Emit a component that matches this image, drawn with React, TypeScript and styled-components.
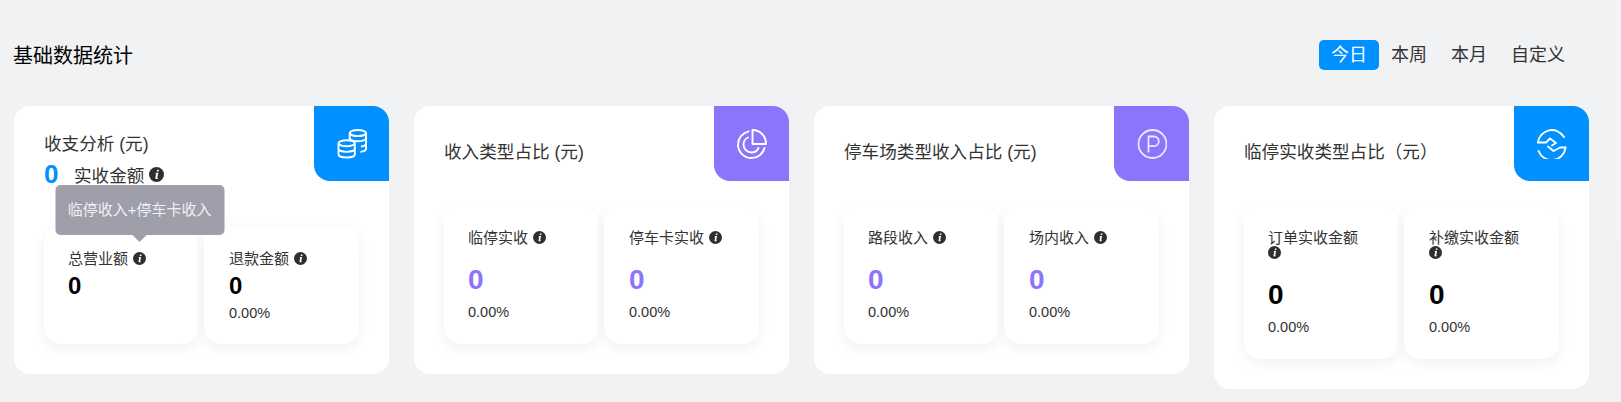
import React from 'react';
import styled, { createGlobalStyle } from 'styled-components';

const BLUE = '#0090ff';
const PURPLE = '#8a75fc';

const GlobalStyle = createGlobalStyle`
  html, body {
    margin: 0;
    padding: 0;
    background: #f1f2f4;
    overflow: hidden;
  }
  body {
    font-family: "Liberation Sans", "Noto Sans CJK SC", sans-serif;
    color: #333;
  }
`;

const Page = styled.div`
  width: 1621px;
  height: 402px;
  padding: 0 32px 0 14px;
  box-sizing: border-box;
`;

// faint scrollbar track along the right edge
const ScrollTrack = styled.div`
  position: absolute;
  top: 0;
  right: 0;
  width: 7px;
  height: 240px;
  background: #f3f4f6;
  border-radius: 0 0 0 2px;
`;

const TopBar = styled.div`
  height: 106px;
  padding: 40px 0 0;
  box-sizing: border-box;
  display: flex;
  justify-content: space-between;
  align-items: flex-start;
`;

const PageTitle = styled.h2`
  margin: 0 0 0 -1px;
  font-size: 20px;
  font-weight: 400;
  line-height: 32px;
  color: #000;
`;

const Tabs = styled.div`
  display: flex;
  margin-right: 12px;
`;

const Tab = styled.div<{ $active?: boolean }>`
  height: 30px;
  line-height: 30px;
  padding: 0 12px;
  border-radius: 5px;
  font-size: 18px;
  color: ${(p) => (p.$active ? '#fff' : '#333')};
  background: ${(p) => (p.$active ? BLUE : 'transparent')};
`;

const CardRow = styled.div`
  display: flex;
  align-items: flex-start;
  gap: 25px;
`;

const Card = styled.section`
  position: relative;
  width: 375px;
  padding: 0 30px 30px;
  box-sizing: border-box;
  background: #fff;
  border-radius: 16px;
`;

const Badge = styled.div<{ $color: string }>`
  position: absolute;
  top: 0;
  right: 0;
  width: 75px;
  height: 75px;
  display: flex;
  align-items: center;
  justify-content: center;
  background: ${(p) => p.$color};
  border-radius: 0 16px 0 16px;
  color: #fff;
`;

const Head = styled.div<{ $tall?: boolean }>`
  height: ${(p) => (p.$tall ? '120px' : '100px')};
  padding-top: ${(p) => (p.$tall ? '28px' : '36px')};
  box-sizing: border-box;
`;

const CardTitle = styled.div`
  font-size: 17.6px;
  line-height: 20px;
  color: #333;
`;

const Summary = styled.div`
  display: flex;
  align-items: center;
  height: 24px;
  margin-top: 8px;
  font-size: 17.6px;
  color: #333;
`;

const SummaryValue = styled.span`
  width: 30px;
  font-size: 26px;
  font-weight: 700;
  color: ${BLUE};
`;

const Stats = styled.div`
  display: flex;
`;

const Stat = styled.div<{ $tall?: boolean; $low?: boolean }>`
  width: 154px;
  height: ${(p) => (p.$tall ? '153px' : p.$low ? '118px' : '138px')};
  padding: ${(p) => (p.$low ? '25px' : '24px')} 12px 0 24px;
  box-sizing: border-box;
  background: #fff;
  border-radius: 16px;
  box-shadow: 0 4px 14px rgba(0, 0, 0, 0.06);
  & + & {
    margin-left: 6px;
    width: 155px;
    padding-left: 25px;
  }
`;

const StatLabel = styled.div`
  font-size: 15px;
  line-height: 16px;
  color: #333;
`;

const StatValue = styled.div<{ $color?: string; $small?: boolean; $top: number }>`
  margin-top: ${(p) => p.$top}px;
  font-size: ${(p) => (p.$small ? '24px' : '28px')};
  line-height: 28px;
  font-weight: 700;
  color: ${(p) => p.$color || '#000'};
`;

const Percent = styled.div<{ $top: number }>`
  margin-top: ${(p) => p.$top}px;
  font-size: 14.5px;
  line-height: 16px;
  color: #333;
`;

const InfoWrap = styled.span<{ $size?: number }>`
  position: relative;
  display: inline-block;
  flex: none;
  width: ${(p) => p.$size || 13}px;
  height: ${(p) => p.$size || 13}px;
  margin-left: 5px;
  vertical-align: -1px;
`;

const InfoBreak = styled(InfoWrap)`
  display: block;
  margin: 0;
`;

const Tooltip = styled.div`
  position: absolute;
  left: 50%;
  bottom: 30px;
  transform: translateX(-50%);
  width: 169px;
  height: 50px;
  line-height: 50px;
  text-align: center;
  font-size: 15px;
  color: #f0f0f2;
  background: #9e9fab;
  border-radius: 5px;
  white-space: nowrap;
  &::after {
    content: '';
    position: absolute;
    left: 50%;
    bottom: -7px;
    margin-left: -7px;
    border-style: solid;
    border-width: 7px 7px 0;
    border-color: #9e9fab transparent transparent;
  }
`;

const InfoGlyph = () => (
  <svg width="100%" height="100%" viewBox="0 0 13 13" style={{ display: 'block' }}>
    <circle cx="6.5" cy="6.5" r="6.5" fill="#2f2f2f" />
    <path d="M7 2.4h1.6l-.3 1.5H6.700zM6.300 5h1.800l-.9 4.200c0 .3.2.3.6.1l-.1.8c-1 .5-2.300.4-2.200-.8l.7-3.400-.8-.1z" fill="#fff" />
  </svg>
);

const Info = ({ tip }: { tip?: string }) => (
  <InfoWrap>
    <InfoGlyph />
    {tip && <Tooltip>{tip}</Tooltip>}
  </InfoWrap>
);

const CoinsIcon = () => (
  <svg width="30" height="30" viewBox="0.5 0 28.5 29.5" fill="none" stroke="currentColor" strokeWidth="1.9">
    <ellipse cx="20.500" cy="4" rx="8" ry="3" />
    <path d="M12.500 4v9M28.500 4v15.500c0 1.500-2.200 2.700-5.500 3M12.500 9c0 1.600 3.600 3 8 3s8-1.400 8-3M23.500 17.200c2.900-.4 5-1.500 5-3" />
    <ellipse cx="9.500" cy="14" rx="8" ry="3" fill="#0090ff" />
    <path d="M1.500 14v11c0 1.700 3.600 3 8 3s8-1.300 8-3V14M1.500 19.500c0 1.700 3.600 3 8 3s8-1.300 8-3" />
  </svg>
);

const PieIcon = () => (
  <svg width="30" height="30" viewBox="0 0 30 30" fill="none" stroke="currentColor" strokeWidth="1.9">
    <path d="M15.500 1c7.500 0 13.500 6 13.500 14H15.500z" strokeLinejoin="round" />
    <path d="M11.500 2.300C5.500 3.800 1 9.200 1 15.500 1 23 7 29 14.500 29c6.200 0 11.500-4.200 13-10" strokeLinecap="round" />
    <path d="M11 8.500c-2.700 1.300-4.500 4-4.500 7 0 4.400 3.600 8 8 8 3 0 5.700-1.700 7-4.500" strokeLinecap="round" />
  </svg>
);

const ParkingIcon = () => (
  <svg width="30" height="30" viewBox="0 0 30 30" fill="none" stroke="currentColor" strokeWidth="1.8" style={{ opacity: 0.85 }}>
    <circle cx="15.500" cy="15" r="14" />
    <path d="M11.500 23.500V7.500h5.500a4.800 4.800 0 0 1 0 9.600h-5.500" />
  </svg>
);

const ExchangeIcon = () => (
  <svg width="30" height="30" viewBox="0 0 30 30" fill="none" stroke="currentColor" strokeWidth="1.9" strokeLinecap="round" strokeLinejoin="round">
    <path d="M1 13.500A14 14 0 0 1 27 8" />
    <path d="M1 13.500H9l4-4 6 4.500-4 2.500" />
    <path d="M28.500 18.500A14 14 0 0 1 1.500 22" />
    <path d="M28.500 18.500H23L16.500 22 11 17.500" />
  </svg>
);

export default function App() {
  return (
    <Page>
      <GlobalStyle />
      <ScrollTrack />
      <TopBar>
        <PageTitle>基础数据统计</PageTitle>
        <Tabs>
          <Tab $active>今日</Tab>
          <Tab>本周</Tab>
          <Tab>本月</Tab>
          <Tab>自定义</Tab>
        </Tabs>
      </TopBar>
      <CardRow>
        <Card>
          <Badge $color={BLUE}><CoinsIcon /></Badge>
          <Head $tall>
            <CardTitle>收支分析 (元)</CardTitle>
            <Summary>
              <SummaryValue>0</SummaryValue>
              <span>实收金额</span>
              <InfoWrap $size={15}><InfoGlyph /></InfoWrap>
            </Summary>
          </Head>
          <Stats>
            <Stat $low>
              <StatLabel>总营业额<Info tip="临停收入+停车卡收入" /></StatLabel>
              <StatValue $small $top={5}>0</StatValue>
            </Stat>
            <Stat $low>
              <StatLabel>退款金额<Info /></StatLabel>
              <StatValue $small $top={5}>0</StatValue>
              <Percent $top={5}>0.00%</Percent>
            </Stat>
          </Stats>
        </Card>
        <Card>
          <Badge $color={PURPLE}><PieIcon /></Badge>
          <Head><CardTitle>收入类型占比 (元)</CardTitle></Head>
          <Stats>
            <Stat>
              <StatLabel>临停实收<Info /></StatLabel>
              <StatValue $color={PURPLE} $top={20}>0</StatValue>
              <Percent $top={10}>0.00%</Percent>
            </Stat>
            <Stat>
              <StatLabel>停车卡实收<Info /></StatLabel>
              <StatValue $color={PURPLE} $top={20}>0</StatValue>
              <Percent $top={10}>0.00%</Percent>
            </Stat>
          </Stats>
        </Card>
        <Card>
          <Badge $color={PURPLE}><ParkingIcon /></Badge>
          <Head><CardTitle>停车场类型收入占比 (元)</CardTitle></Head>
          <Stats>
            <Stat>
              <StatLabel>路段收入<Info /></StatLabel>
              <StatValue $color={PURPLE} $top={20}>0</StatValue>
              <Percent $top={10}>0.00%</Percent>
            </Stat>
            <Stat>
              <StatLabel>场内收入<Info /></StatLabel>
              <StatValue $color={PURPLE} $top={20}>0</StatValue>
              <Percent $top={10}>0.00%</Percent>
            </Stat>
          </Stats>
        </Card>
        <Card>
          <Badge $color={BLUE}><ExchangeIcon /></Badge>
          <Head><CardTitle>临停实收类型占比（元）</CardTitle></Head>
          <Stats>
            <Stat $tall>
              <StatLabel>订单实收金额<InfoBreak><InfoGlyph /></InfoBreak></StatLabel>
              <StatValue $top={22}>0</StatValue>
              <Percent $top={10}>0.00%</Percent>
            </Stat>
            <Stat $tall>
              <StatLabel>补缴实收金额<InfoBreak><InfoGlyph /></InfoBreak></StatLabel>
              <StatValue $top={22}>0</StatValue>
              <Percent $top={10}>0.00%</Percent>
            </Stat>
          </Stats>
        </Card>
      </CardRow>
    </Page>
  );
}
